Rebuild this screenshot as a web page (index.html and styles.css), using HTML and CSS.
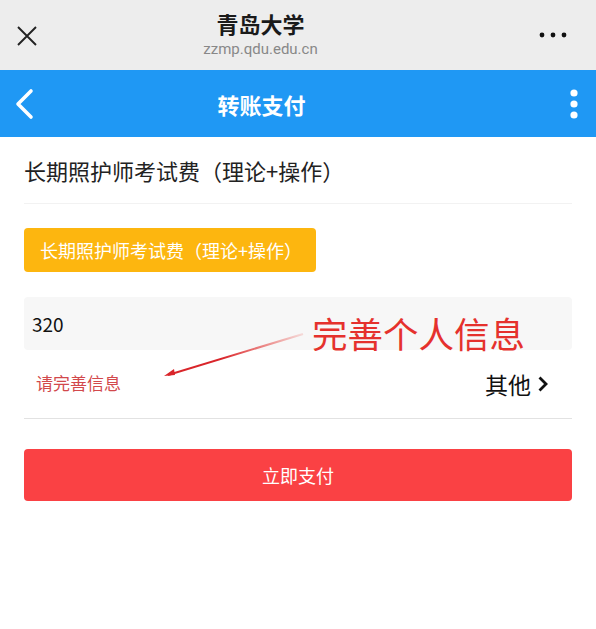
FILE: index.html
```html
<!DOCTYPE html>
<html lang="zh-CN">

<head>
  <meta charset="UTF-8">
  <meta name="viewport" content="width=device-width, initial-scale=1.0">
  <title>转账支付</title>
  <link rel="stylesheet" href="styles.css">
</head>

<body>
  <!-- 顶部浏览器栏 -->
  <div class="topbar">
    <svg class="close" width="22" height="22" viewBox="0 0 22 22">
      <path d="M2 2 L20 20 M20 2 L2 20" stroke="#222" stroke-width="1.9" fill="none" />
    </svg>
    <div class="site">
      <div class="site-name">青岛大学</div>
      <div class="site-url">zzmp.qdu.edu.cn</div>
    </div>
    <svg class="more" width="28" height="8" viewBox="0 0 28 8">
      <circle cx="3" cy="4" r="2.4" fill="#111" />
      <circle cx="14" cy="4" r="2.4" fill="#111" />
      <circle cx="25" cy="4" r="2.4" fill="#111" />
    </svg>
  </div>

  <!-- 导航栏 -->
  <div class="navbar">
    <svg class="back" width="20" height="32" viewBox="0 0 20 32">
      <path d="M17 3 L4 16 L17 29" stroke="#fff" stroke-width="3.6" stroke-linecap="round" stroke-linejoin="round" fill="none" />
    </svg>
    <div class="nav-title">转账支付</div>
    <svg class="menu" width="10" height="30" viewBox="0 0 10 30">
      <circle cx="5" cy="4" r="3.6" fill="#fff" />
      <circle cx="5" cy="15" r="3.6" fill="#fff" />
      <circle cx="5" cy="26" r="3.6" fill="#fff" />
    </svg>
  </div>

  <div class="pay">
    <div class="pay-title">长期照护师考试费（理论+操作）</div>
    <div class="pay-tag">长期照护师考试费（理论+操作）</div>
    <div class="pay-amount">320</div>
    <div class="pay-row">
      <span class="pay-tip">请完善信息</span>
      <span class="pay-other">其他
        <svg width="12" height="20" viewBox="0 0 12 20">
          <path d="M2.5 3.5 L9 10 L2.5 16.5" stroke="#111" stroke-width="2.8" fill="none" />
        </svg>
      </span>
    </div>
    <button class="pay-btn">立即支付</button>

    <!-- 截图标注 -->
    <div class="note">完善个人信息</div>
    <svg class="note-arrow" width="150" height="50" viewBox="0 0 150 50">
      <defs>
        <linearGradient id="fade" x1="1" y1="0" x2="0" y2="1">
          <stop offset="0" stop-color="#e8372f" stop-opacity="0.15" />
          <stop offset="0.6" stop-color="#d9252a" />
        </linearGradient>
      </defs>
      <path d="M143 5 L8 46" stroke="url(#fade)" stroke-width="2" fill="none" />
      <path d="M4 47 L14 40 L15 46 Z" fill="#d9252a" />
    </svg>
  </div>
</body>

</html>
```

FILE: styles.css
```css
* {
  box-sizing: border-box;
}

body {
  margin: 0;
  background-color: white;
  font-family: "Noto Sans CJK SC", "Noto Sans", sans-serif;
  color: #222;
}

.topbar {
  height: 70px;
  background-color: #ededed;
  display: flex;
  align-items: center;
  padding: 0 29px 0 16px;
}

.close {
  margin-top: 2px;
}

.site {
  flex: 1;
  text-align: center;
  margin-right: 56px;
}

.site-name {
  font-size: 22px;
  font-weight: 700;
  line-height: 24px;
  color: #1a1a1a;
}

.site-url {
  margin-top: 4px;
  font-family: Roboto, "Noto Sans", sans-serif;
  font-size: 15px;
  line-height: 20px;
  color: #888;
}

.navbar {
  height: 67px;
  background-color: #1f98f4;
  display: flex;
  align-items: center;
  padding: 0 17px 0 14px;
}

.nav-title {
  flex: 1;
  text-align: center;
  margin-right: 80px;
  color: #fff;
  font-size: 22px;
  font-weight: 700;
}

.pay {
  position: relative;
  padding: 0 24px;
}

.pay-title {
  height: 67px;
  line-height: 66px;
  font-size: 22px;
  color: #222;
  border-bottom: 1px solid #f2f2f2;
}

.pay-tag {
  display: inline-block;
  margin-top: 24px;
  height: 44px;
  line-height: 44px;
  padding: 0 16px;
  width: 292px;
  background-color: #fdb60f;
  border-radius: 4px;
  color: #fff;
  font-size: 18px;
  white-space: nowrap;
}

.pay-amount {
  margin-top: 25px;
  height: 53px;
  line-height: 53px;
  padding: 0 8px;
  background-color: #f7f7f7;
  border-radius: 4px;
  font-size: 19px;
  color: #111;
}

.pay-row {
  height: 69px;
  display: flex;
  align-items: center;
  justify-content: space-between;
  border-bottom: 1px solid #e2e2e2;
  padding: 0 23px 0 12px;
}

.pay-tip {
  color: #d2494c;
  font-size: 17px;
  margin-top: -4px;
}

.pay-other {
  display: flex;
  align-items: center;
  gap: 6px;
  font-size: 23px;
  color: #111;
}

.pay-btn {
  display: block;
  width: 100%;
  margin-top: 30px;
  height: 52px;
  border: none;
  border-radius: 4px;
  background-color: #fa4144;
  color: #fff;
  font-family: inherit;
  font-size: 18px;
}

.note {
  position: absolute;
  left: 312px;
  top: 173px;
  font-size: 35.5px;
  line-height: 46px;
  color: #e5312d;
}

.note-arrow {
  position: absolute;
  left: 160px;
  top: 192px;
}
```
